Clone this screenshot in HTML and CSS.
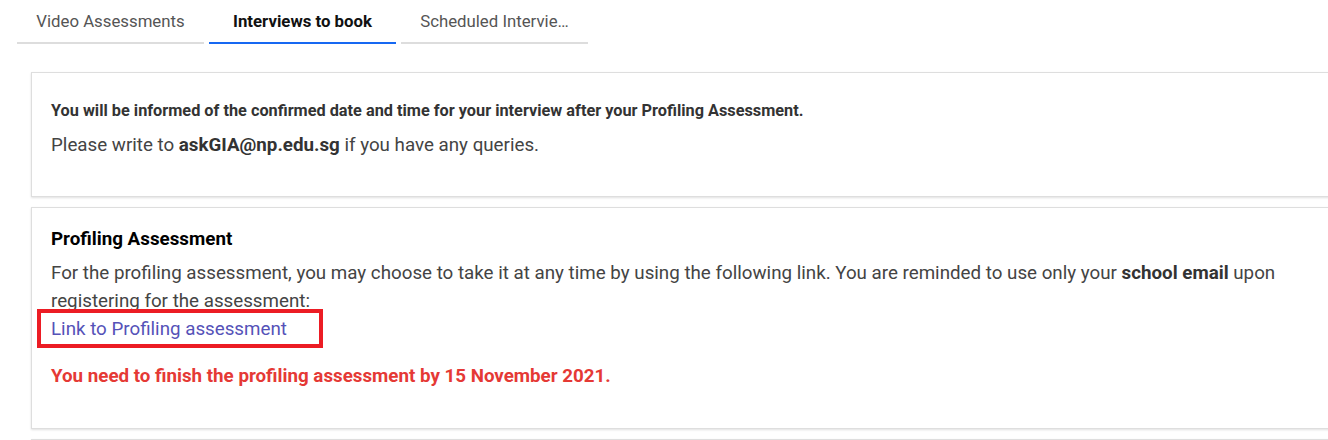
FILE: index.html
```html
<!DOCTYPE html>
<html lang="en">
<head>
    <meta charset="UTF-8">
    <meta name="viewport" content="width=device-width, initial-scale=1.0">
    <title>Interviews to book</title>
    <link rel="stylesheet" href="styles.css">
</head>
<body>
    <div class="page">
        <div class="tabs">
            <div class="tab">Video Assessments</div>
            <div class="tab active">Interviews to book</div>
            <div class="tab">Scheduled Intervie…</div>
        </div>

        <div class="card">
            <p class="notice">You will be informed of the confirmed date and time for your interview after your Profiling Assessment.</p>
            <p class="text">Please write to <strong>askGIA@np.edu.sg</strong> if you have any queries.</p>
        </div>

        <div class="card profiling">
            <h3>Profiling Assessment</h3>
            <p class="text">For the profiling assessment, you may choose to take it at any time by using the following link. You are reminded to use only your <strong>school email</strong> upon registering for the assessment:<br>
                <a href="#" class="link">Link to Profiling assessment</a>
            </p>
            <p class="deadline">You need to finish the profiling assessment by 15 November 2021.</p>
        </div>

        <div class="card"></div>
    </div>
</body>
</html>
```

FILE: styles.css
```css
body {
    font-family: Roboto, "Liberation Sans", Arial, sans-serif;
    background-color: #ffffff;
    margin: 0;
    padding: 0;
    overflow: hidden;
}
.page {
    padding: 0 0 0 17px;
    width: 1400px;
}
.tabs {
    display: flex;
    gap: 5px;
}
.tab {
    width: 187px;
    height: 42px;
    line-height: 42px;
    text-align: center;
    font-size: 16.8px;
    color: #555;
    border-bottom: 2px solid #dddddd;
    white-space: nowrap;
}
.tab.active {
    color: #111;
    font-weight: bold;
    border-bottom-color: #1668f2;
}
.card {
    margin: 28px 0 0 14px;
    width: 1261px;
    padding: 28px 20px 37px 19px;
    border: 1px solid #dedede;
    box-shadow: 0 1px 2px rgba(0, 0, 0, 0.12);
    color: #444;
}
.card + .card {
    margin-top: 10px;
}
.notice {
    margin: 0 0 10px;
    font-size: 16.3px;
    font-weight: bold;
    line-height: 20px;
    color: #333;
}
.text {
    margin: 0;
    font-size: 18.75px;
    line-height: 28px;
}
.text strong {
    color: #333;
}
.profiling {
    padding: 19px 20px 40px 19px;
}
.profiling h3 {
    margin: 0 0 8px;
    font-size: 18.8px;
    line-height: 24px;
    color: #000;
}
.link {
    position: relative;
    color: #5552b8;
    text-decoration: none;
}
.link::after {
    content: "";
    position: absolute;
    left: -14px;
    right: -36px;
    top: -9px;
    bottom: -8px;
    border: 4px solid #ec1c24;
}
.deadline {
    margin: 21px 0 0;
    font-size: 18.75px;
    line-height: 24px;
    font-weight: bold;
    color: #e53935;
}
```
